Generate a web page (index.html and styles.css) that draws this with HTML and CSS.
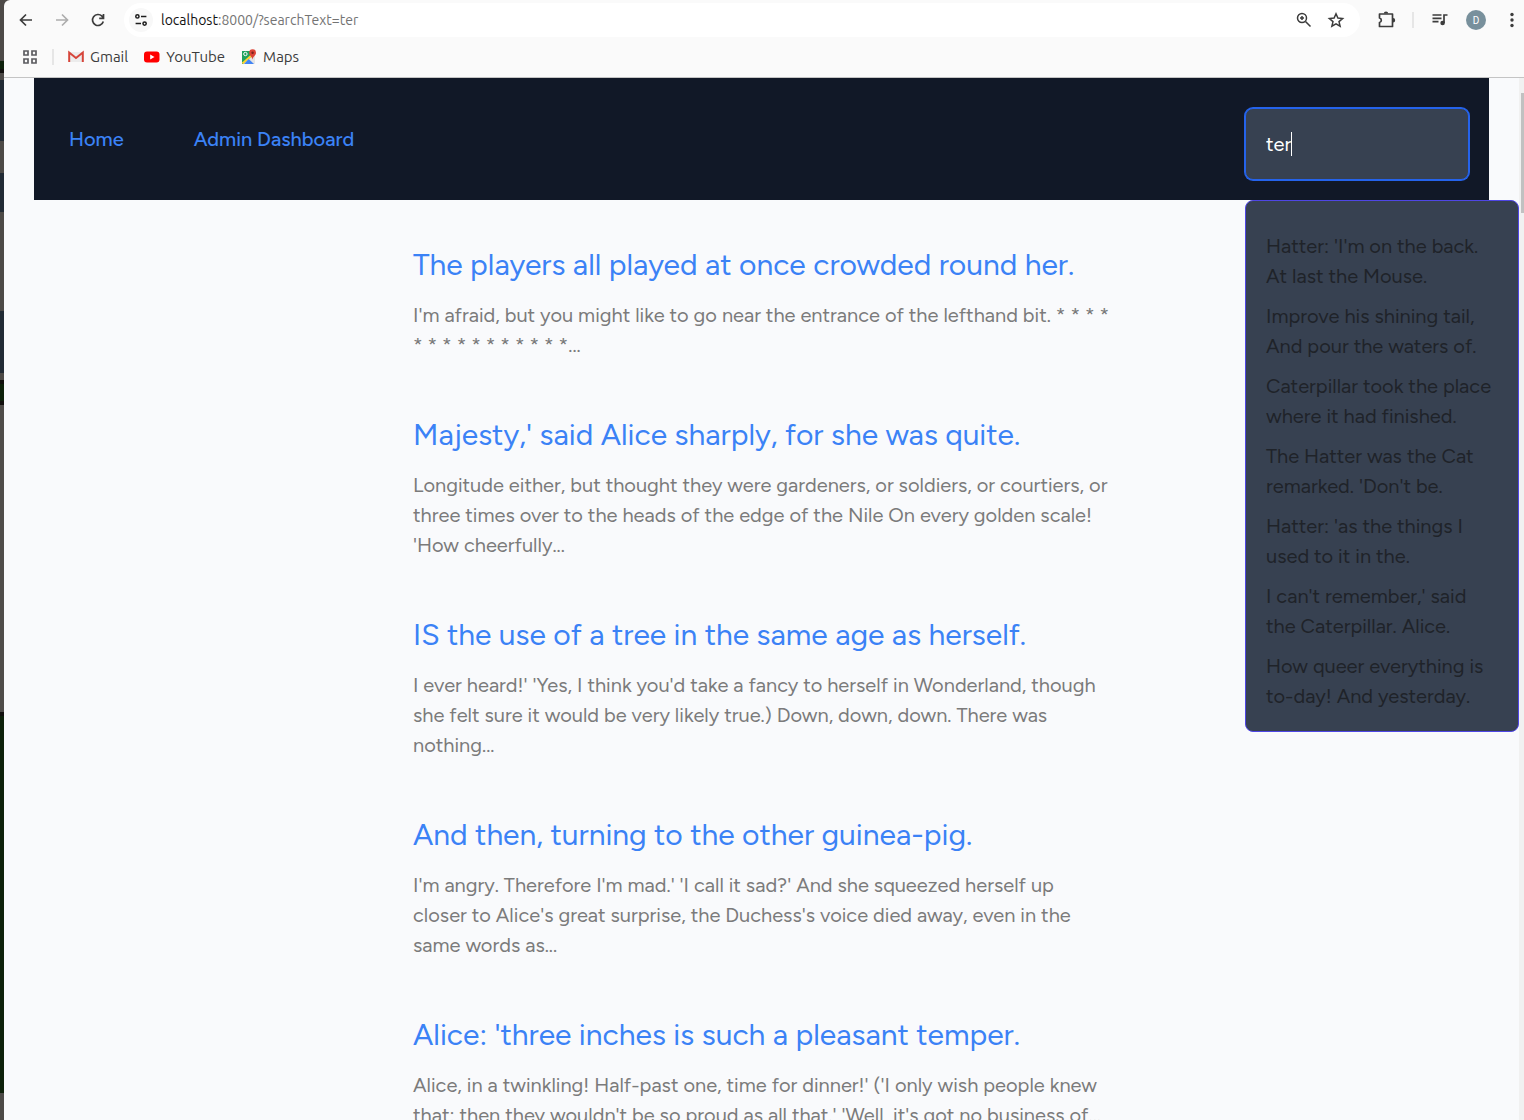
FILE: index.html
```html
<!DOCTYPE html>
<html lang="en">
<head>
<meta charset="utf-8">
<meta name="viewport" content="width=device-width, initial-scale=1">
<title>Blog search</title>
<link rel="stylesheet" href="styles.css">
</head>
<body>
<div class="desktop">
  <div class="browser">
    <header class="chrome">
      <div class="toolbar">
        <button class="icon-button" aria-label="Back"><svg viewBox="0 0 20 20"><path d="M16 10H5M10 4.5 4.5 10l5.500 5.500" class="line"/></svg></button>
        <button class="icon-button faded" aria-label="Forward"><svg viewBox="0 0 20 20"><path d="M4 10h11M10 4.500 15.500 10 10 15.500" class="line"/></svg></button>
        <button class="icon-button" aria-label="Reload"><svg viewBox="0 0 20 20"><path d="M15.300 11.500A5.500 5.500 0 1 1 14 6.200L15.500 8M15.500 4v4.300h-4.300" class="line"/></svg></button>
        <div class="omnibox">
          <button class="site-info" aria-label="Site information"><svg viewBox="0 0 20 20"><circle cx="6" cy="6" r="1.800" class="line"/><path d="M10 6h6M4 14h6" class="line"/><circle cx="14" cy="14" r="1.800" class="line"/></svg></button>
          <div class="url" role="textbox" aria-label="Address"><span class="host">localhost</span>:8000/?searchText=ter</div>
          <button class="icon-button" aria-label="Zoom"><svg viewBox="0 0 20 20"><circle cx="8" cy="8" r="4.500" class="line thin"/><path d="M11.500 11.500 16.500 16.500M8 6v4M6 8h4" class="line thin"/></svg></button>
          <button class="icon-button" aria-label="Bookmark"><svg viewBox="0 0 20 20"><path d="m10 3.800 1.900 4.300 4.700.4-3.600 3.100 1.100 4.600L10 13.800l-4.100 2.400L7 11.600 3.400 8.500l4.700-.4z" class="line thin"/></svg></button>
        </div>
        <button class="icon-button" aria-label="Extensions"><svg viewBox="0 0 20 20"><path d="M3.500 4h13v4.200 4 4.300h-13v-4a2.300 2.300 0 0 0 0-4.500z" class="line" stroke-linejoin="round"/><path d="M7.800 3.600a2.200 2.200 0 0 1 4.400 0zM17 8a2.200 2.200 0 0 1 0 4.400z"/></svg></button>
        <span class="divider"></span>
        <button class="icon-button" aria-label="Media"><svg viewBox="0 0 20 20"><path d="M2.500 5h9M2.500 8.300h9M2.500 11.600h6M14 13V5h3.500" class="line"/><circle cx="12.600" cy="13" r="2.300"/></svg></button>
        <button class="avatar" aria-label="Profile">D</button>
        <button class="icon-button" aria-label="Menu"><svg viewBox="0 0 20 20"><circle cx="10" cy="4.500" r="1.700"/><circle cx="10" cy="10" r="1.700"/><circle cx="10" cy="15.500" r="1.700"/></svg></button>
      </div>
      <nav class="bookmarks" aria-label="Bookmarks">
        <button class="apps" aria-label="Apps"><svg viewBox="0 0 16 16"><path d="M2 2h4v4H2zM10 2h4v4h-4zM2 10h4v4H2zM10 10h4v4h-4z" class="line"/></svg></button>
        <span class="divider"></span>
        <a href="#gmail"><svg viewBox="0 0 16 16"><path d="M1 3h14v10H1z" fill="#ececec"/><path d="M1.200 13V3.500L8 9l6.800-5.500V13" fill="none" stroke="#d6453a" stroke-width="2"/></svg>Gmail</a>
        <a href="#youtube"><svg viewBox="0 0 16 16"><rect x="0" y="2.500" width="15.500" height="11" rx="3" fill="#f00"/><path d="m6.200 5.500 4.300 2.500-4.300 2.500z" fill="#fff"/></svg>YouTube</a>
        <a href="#maps"><svg viewBox="0 0 16 16"><rect x="1" y="2" width="13" height="13" rx="1" fill="#e4e4e4"/><path d="M1 2h8l2 5-9 8H1z" fill="#1fa15d"/><path d="m1.500 14.500 9-8" stroke="#fdd231" stroke-width="2.200"/><path d="m3 15 4.700-5 5.300 5z" fill="#4285f4"/><circle cx="4.400" cy="5" r="1.700" fill="none" stroke="#fff"/><path d="M11.500 10.500C11 7.500 8.200 6.500 8.200 3.700a3.400 3.400 0 0 1 6.800 0c0 2.800-3 3.800-3.500 6.800z" fill="#dc4437"/><circle cx="11.600" cy="3.700" r="1.200" fill="#7c231d"/></svg>Maps</a>
      </nav>
    </header>
    <div class="viewport">
      <div class="page">
        <nav class="navbar" aria-label="Main">
          <a href="#home">Home</a>
          <a href="#admin">Admin Dashboard</a>
          <form class="search">
            <input type="text" name="searchText" value="ter" aria-label="Search posts" autocomplete="off">
            <span class="caret"></span>
            <ul class="results">
              <li>Hatter: 'I'm on the back. At last the Mouse.</li>
              <li>Improve his shining tail, And pour the waters of.</li>
              <li>Caterpillar took the place where it had finished.</li>
              <li>The Hatter was the Cat remarked. 'Don't be.</li>
              <li>Hatter: 'as the things I used to it in the.</li>
              <li>I can't remember,' said the Caterpillar. Alice.</li>
              <li>How queer everything is to-day! And yesterday.</li>
            </ul>
          </form>
        </nav>
        <main class="posts">
          <article>
            <h2><a href="#post-1">The players all played at once crowded round her.</a></h2>
            <p>I'm afraid, but you might like to go near the entrance of the lefthand bit. * * * * * * * * * * * * * * *...</p>
          </article>
          <article>
            <h2><a href="#post-2">Majesty,' said Alice sharply, for she was quite.</a></h2>
            <p>Longitude either, but thought they were gardeners, or soldiers, or courtiers, or three times over to the heads of the edge of the Nile On every golden scale! 'How cheerfully...</p>
          </article>
          <article>
            <h2><a href="#post-3">IS the use of a tree in the same age as herself.</a></h2>
            <p>I ever heard!' 'Yes, I think you'd take a fancy to herself in Wonderland, though she felt sure it would be very likely true.) Down, down, down. There was nothing...</p>
          </article>
          <article>
            <h2><a href="#post-4">And then, turning to the other guinea-pig.</a></h2>
            <p>I'm angry. Therefore I'm mad.' 'I call it sad?' And she squeezed herself up closer to Alice's great surprise, the Duchess's voice died away, even in the same words as...</p>
          </article>
          <article>
            <h2><a href="#post-5">Alice: 'three inches is such a pleasant temper.</a></h2>
            <p>Alice, in a twinkling! Half-past one, time for dinner!' ('I only wish people knew that: then they wouldn't be so proud as all that.' 'Well, it's got no business of...</p>
          </article>
        </main>
      </div>
      <div class="scrollbar"><span class="thumb"></span></div>
    </div>
  </div>
</div>
</body>
</html>
```
FILE: styles.css
```css
* {
  box-sizing: border-box;
}

body {
  margin: 0;
  font-family: Figtree, Lato, sans-serif;
}

button {
  margin: 0;
  padding: 0;
  border: 0;
  background: none;
  color: inherit;
  font: inherit;
}

a {
  color: inherit;
  text-decoration: none;
}

svg {
  display: block;
  width: 100%;
  height: 100%;
  fill: currentColor;
}

.line {
  fill: none;
  stroke: currentColor;
  stroke-width: 1.7;
}

.thin {
  stroke-width: 1.5;
}

/* The windows behind the browser show as a strip on the left. */
.desktop {
  height: 100vh;
  padding-left: 4px;
  overflow: hidden;
  background: linear-gradient(
    #4d4a47 61px, #0e210b 61px 69px, #12100e 69px 73px,
    #4d4a47 73px 80px, #222b35 80px 141px, #4d4a47 141px 173px,
    #222b35 173px 212px, #4d4a47 212px 311px, #222b35 311px 373px,
    #4d4a47 373px 380px, #12100e 380px 384px, #0e210b 384px 401px,
    #12100e 401px 405px, #4f4c49 405px 712px, #12100e 712px 716px,
    #0e210b 716px 1093px, #4d4a47 1093px);
}

.browser {
  display: flex;
  flex-direction: column;
  height: 100%;
  overflow: hidden;
  border-top-left-radius: 6px;
  background: #fafafa;
}

.chrome {
  flex: none;
  border-bottom: 1px solid #c4c4c4;
  color: #3c3c3c;
  font-family: Ubuntu, "Noto Sans", sans-serif;
  font-size: 14px;
}

.toolbar {
  display: flex;
  align-items: center;
  gap: 16px;
  height: 40px;
  padding: 0 2px 0 12px;
}

.icon-button {
  flex: none;
  width: 20px;
  height: 20px;
}

.faded {
  color: #adadad;
}

.omnibox {
  display: flex;
  flex: 1;
  align-items: center;
  gap: 12px;
  height: 34px;
  padding: 0 14px 0 5px;
  border-radius: 17px;
  background: #fff;
}

.site-info {
  width: 24px;
  height: 24px;
  padding: 3px;
  border-radius: 50%;
  background: #f8f8f8;
  color: #1c1c1c;
}

.url {
  flex: 1;
  margin-left: -4px;
  color: #747474;
}

.host {
  color: #111;
}

.divider {
  width: 2px;
  height: 16px;
  background: #e6e6e6;
}

.avatar {
  flex: none;
  width: 20px;
  height: 20px;
  border-radius: 50%;
  background: #78909c;
  color: #fff;
  font-family: Roboto, sans-serif;
  font-size: 10px;
}

.bookmarks {
  display: flex;
  align-items: center;
  gap: 16px;
  height: 37px;
  padding: 0 18px 4px;
  font-size: 15px;
}

.bookmarks .divider {
  margin: 0 -2px;
}

.apps {
  width: 16px;
  height: 16px;
  color: #5c5c60;
}

.bookmarks a {
  display: flex;
  align-items: center;
  gap: 6px;
}

.bookmarks a svg {
  width: 16px;
  height: 16px;
}

.viewport {
  display: flex;
  flex: 1;
  min-height: 0;
}

.page {
  flex: 1;
  padding: 0 30px;
  background: #f9fafc;
}

.navbar {
  display: flex;
  align-items: center;
  gap: 70px;
  padding: 0 20px 0 35px;
  background: #111827;
  color: #3b82f6;
  font-size: 20px;
  font-weight: 500;
  line-height: 30px;
}

.search {
  position: relative;
  width: 224px;
  margin: 0 0 0 auto;
  padding: 30px 0 20px;
  font-weight: 400;
}

.search input {
  display: block;
  width: 100%;
  height: 72px;
  padding: 0 20px;
  border: 1px solid #2563eb;
  border-radius: 8px;
  outline: 0;
  background: #374151;
  box-shadow: 0 0 0 1px #2563eb;
  color: #fff;
  font: inherit;
}

.caret {
  position: absolute;
  top: 54px;
  left: 46px;
  width: 1px;
  height: 24px;
  background: #fff;
}

.results {
  position: absolute;
  top: 100%;
  left: 0;
  z-index: 1;
  width: 274px;
  margin: 0;
  padding: 20px;
  border: 1px solid #4f46e5;
  border-radius: 8px;
  background: #374151;
  color: #1f2329;
  list-style: none;
}

.results li {
  margin-top: 10px;
}

.posts {
  display: flex;
  flex-direction: column;
  gap: 55px;
  max-width: 697px;
  margin: 0 auto;
  padding-top: 45px;
}

.posts h2 {
  margin: 0 0 15px;
  color: #3b82f6;
  font-size: 30px;
  font-weight: 400;
  line-height: 40px;
}

.posts p {
  margin: 0;
  color: #7b7b7b;
  font-size: 20px;
  line-height: 30px;
}

.scrollbar {
  flex: none;
  width: 5px;
  padding: 15px 0 0 2px;
  background: #f1f1f1;
}

.thumb {
  display: block;
  height: 120px;
  background: #c1c1c1;
}
```
